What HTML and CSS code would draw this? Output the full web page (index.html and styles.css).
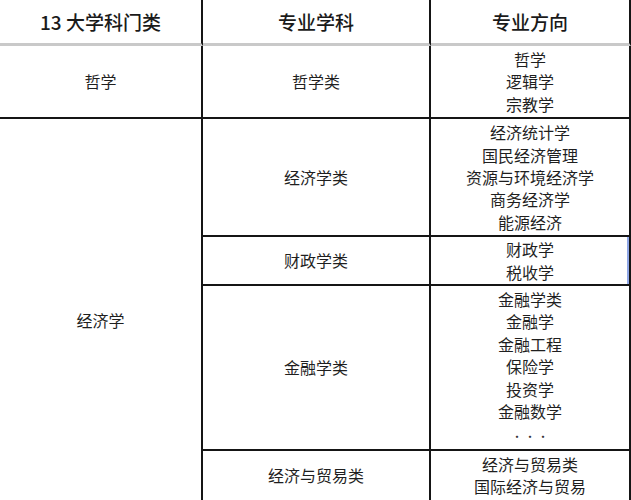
FILE: index.html
```html
<!DOCTYPE html>
<html lang="zh-CN">
<head>
<meta charset="utf-8">
<link rel="stylesheet" href="styles.css">
</head>
<body>
<table class="majors">
  <colgroup>
    <col class="c1"><col class="c2"><col class="c3">
  </colgroup>
  <thead>
    <tr>
      <th>13 大学科门类</th>
      <th>专业学科</th>
      <th class="last">专业方向</th>
    </tr>
  </thead>
  <tbody>
    <tr>
      <td>哲学</td>
      <td>哲学类</td>
      <td class="last">哲学<br>逻辑学<br>宗教学</td>
    </tr>
    <tr>
      <td rowspan="4">经济学</td>
      <td>经济学类</td>
      <td class="last">经济统计学<br>国民经济管理<br>资源与环境经济学<br>商务经济学<br>能源经济</td>
    </tr>
    <tr>
      <td class="tight">财政学类</td>
      <td class="last tight selected">财政学<br>税收学</td>
    </tr>
    <tr>
      <td>金融学类</td>
      <td class="last">金融学类<br>金融学<br>金融工程<br>保险学<br>投资学<br>金融数学<br><span class="dots">···</span></td>
    </tr>
    <tr>
      <td class="open">经济与贸易类</td>
      <td class="last open">经济与贸易类<br>国际经济与贸易</td>
    </tr>
  </tbody>
</table>
</body>
</html>
```

FILE: styles.css
```css
html, body {
  margin: 0;
  padding: 0;
  background: #ffffff;
}

body {
  width: 631px;
  height: 500px;
  overflow: hidden;
  font-family: "Noto Sans CJK SC", "Noto Sans", sans-serif;
  color: #1f1f1f;
}

.majors {
  border-collapse: separate;
  border-spacing: 0;
  table-layout: fixed;
  width: 631px;
}

.c1 { width: 203px; }
.c2 { width: 228px; }
.c3 { width: 200px; }

.majors th,
.majors td {
  box-sizing: border-box;
  border-right: 2px solid #151515;
  border-bottom: 2px solid #151515;
  text-align: center;
  vertical-align: middle;
  padding: 0;
}

.majors th {
  font-size: 19px;
  font-weight: 500;
  line-height: 23px;
  padding: 10px 0;
  border-bottom: 3px solid #c9c9c9;
  color: #1a1a1a;
}

.majors td {
  font-size: 16px;
  font-weight: 400;
  line-height: 22.4px;
  padding: 2px 0;
}

.majors td.tight {
  padding: 1px 0;
}

.majors td.open {
  padding: 2px 0 24px;
}

.majors td.selected {
  box-shadow: inset -2px 0 0 #8fa7e6;
}

.dots {
  letter-spacing: 2px;
  font-size: 11px;
  padding-left: 2px;
  color: #333;
}
```
